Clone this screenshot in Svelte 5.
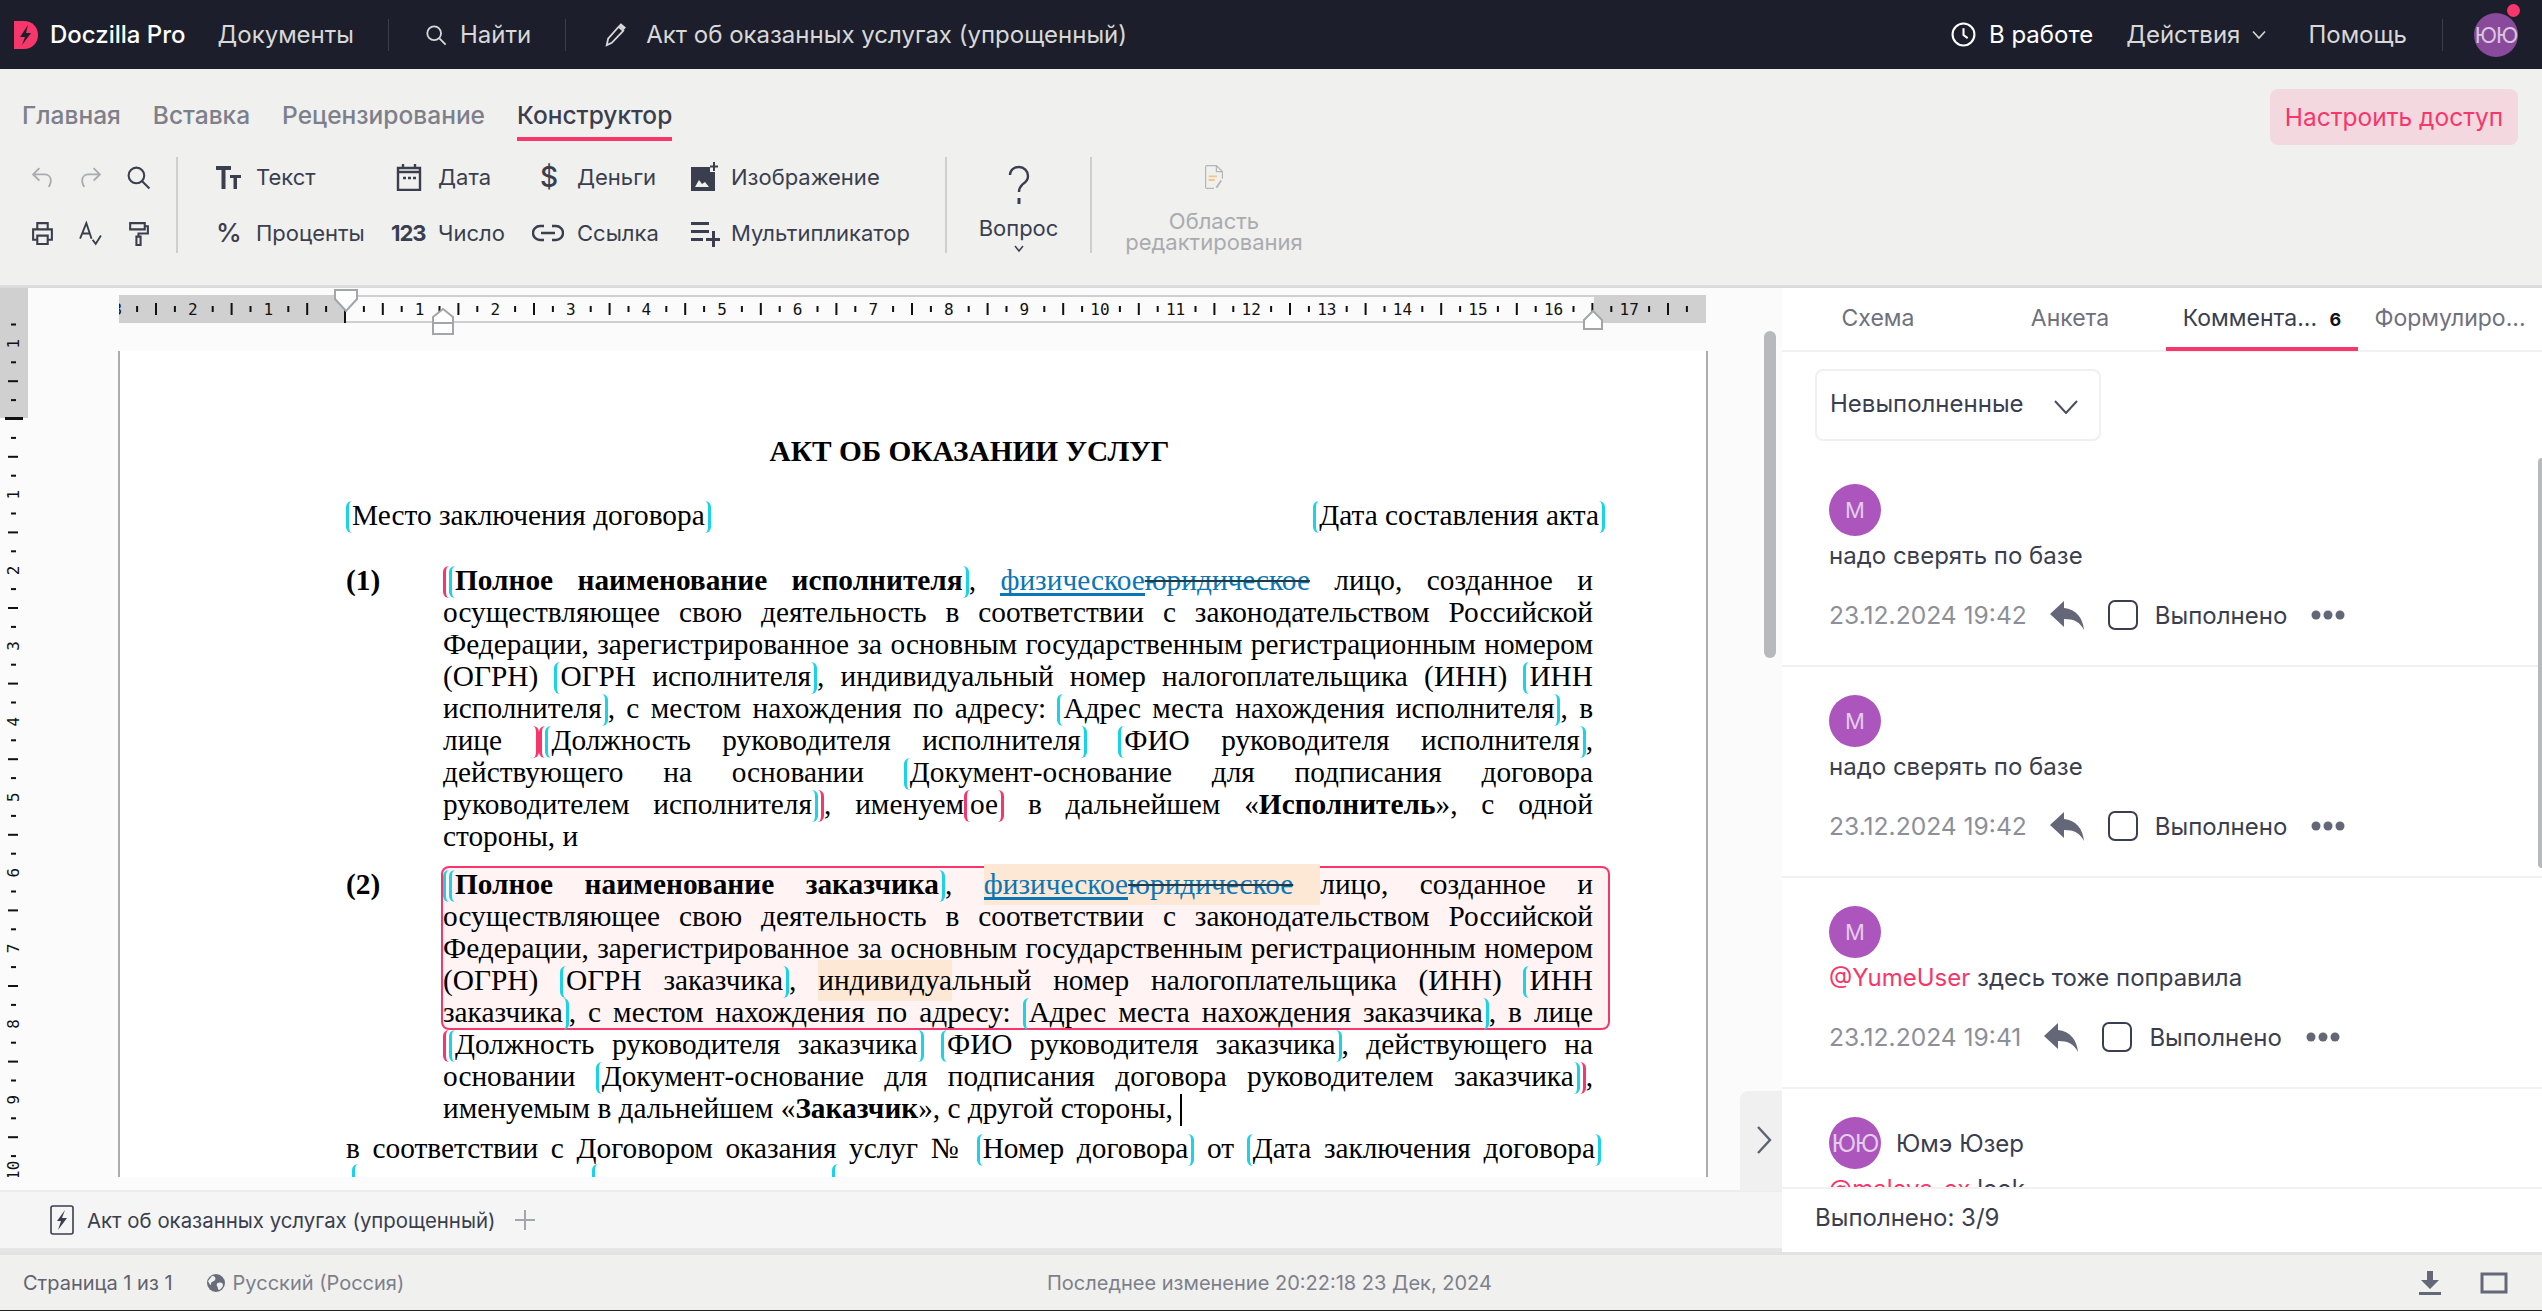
<script>
    // линейка: 75.6px на сантиметр, ноль на левом поле
    const CM = 75.6;
    const hNums = [-3, -2, -1, 1, 2, 3, 4, 5, 6, 7, 8, 9, 10, 11, 12, 13, 14, 15, 16, 17];
    const hTicks = [];
    for (let i = -12; i <= 71; i++) {
        if (i % 4 !== 0) hTicks.push({ x: i * CM / 4, long: i % 2 === 0 });
    }
    hTicks.push({ x: 0, long: true, zero: true });

    const vNums = [-1, 1, 2, 3, 4, 5, 6, 7, 8, 9, 10];
    const vTicks = [];
    for (let i = -5; i <= 41; i++) {
        if (i % 4 !== 0) vTicks.push({ y: i * CM / 4, long: i % 2 === 0 });
    }

    const comments = [
        { initials: "М", text: "надо сверять по базе", date: "23.12.2024 19:42" },
        { initials: "М", text: "надо сверять по базе", date: "23.12.2024 19:42" },
        { initials: "М", mention: "@YumeUser", text: " здесь тоже поправила", date: "23.12.2024 19:41" }
    ];
</script>

<div class="app">
    <header class="topbar">
        <svg class="logo" viewBox="0 0 24 28">
            <path d="M0 0h10c8 0 14 6 14 14s-6 14-14 14H0z" fill="#f7366b" />
            <path d="M14 4 6 16h5l-3 8 9-12h-5z" fill="#1c1f2b" />
        </svg>
        <span class="brand">Doczilla Pro</span>
        <span class="top-link docs">Документы</span>
        <span class="top-sep"></span>
        <svg class="ico-search" viewBox="0 0 24 24" fill="none" stroke="#d8d8d8" stroke-width="2">
            <circle cx="10" cy="10" r="7.5" /><path d="m15.5 15.5 7 7" />
        </svg>
        <span class="top-link find">Найти</span>
        <span class="top-sep"></span>
        <svg class="ico-pencil" viewBox="0 0 24 26" fill="none" stroke="#d8d8d8" stroke-width="2">
            <path d="M3 24l1.500-7L16 4l5 4.500L8.500 21.500zM17.500 2.500l1-1 4 3.500-1 1.200z" />
        </svg>
        <span class="doc-title">Акт об оказанных услугах (упрощенный)</span>
        <span class="spacer"></span>
        <svg class="ico-clock" viewBox="0 0 24 24" fill="none" stroke="#fff" stroke-width="2">
            <circle cx="12" cy="12" r="10.500" /><path d="M12 6v6.500l4 3" />
        </svg>
        <span class="status">В работе</span>
        <span class="top-link actions">Действия</span>
        <svg class="ico-chev" viewBox="0 0 16 10" fill="none" stroke="#d8d8d8" stroke-width="1.600">
            <path d="m2 1.500 6 6.500 6-6.500" />
        </svg>
        <span class="top-link help">Помощь</span>
        <span class="top-sep last"></span>
        <span class="user">ЮЮ<i class="dot"></i></span>
    </header>

    <section class="ribbon">
        <div class="ribbon-tabs">
            <span class="rtab">Главная</span>
            <span class="rtab">Вставка</span>
            <span class="rtab">Рецензирование</span>
            <span class="rtab active">Конструктор</span>
            <span class="spacer"></span>
            <button class="access">Настроить доступ</button>
        </div>
        <div class="ribbon-body">
            <div class="tools">
                <svg viewBox="0 0 24 24" fill="none" stroke="#a9abb2" stroke-width="1.800"><path d="M9 3 3 9l6 6M3 9h11c4 0 6 3 6 6s-1 4-2 6" /></svg>
                <svg viewBox="0 0 24 24" fill="none" stroke="#a9abb2" stroke-width="1.800"><path d="m15 3 6 6-6 6M21 9H10c-4 0-6 3-6 6s1 4 2 6" /></svg>
                <svg viewBox="0 0 24 24" fill="none" stroke="#3a3e4e" stroke-width="2"><circle cx="10" cy="10" r="7.500" /><path d="m15.500 15.500 7 7" /></svg>
                <svg viewBox="0 0 24 24" fill="none" stroke="#3a3e4e" stroke-width="2"><path d="M7 8V2h10v6M7 18H3V8h18v10h-4M7 14h10v8H7z" /></svg>
                <svg viewBox="0 0 24 24" fill="none" stroke="#3a3e4e" stroke-width="1.800"><path d="m2 17 6-15 5 15M4 12h7M14 18l3 4 5-8" /></svg>
                <svg viewBox="0 0 24 24" fill="none" stroke="#3a3e4e" stroke-width="2"><path d="M4 2h14v6H4zM18 5h3v7h-9v3M10 15h4v8h-4z" /></svg>
            </div>
            <div class="inserts">
                <svg class="i" width="26" height="24" viewBox="0 0 26 24" fill="#3a3e4e"><path d="M0 1h15v4H9.500v19h-4V5H0zM14 10h11v3h-4v11h-3.500V13H14z" /></svg>
                <span>Текст</span>
                <svg class="i cal" width="26" height="28" viewBox="0 0 26 28" fill="none" stroke="#3a3e4e" stroke-width="2.400"><path d="M2 5h22v22H2zM7 1v5M19 1v5M2 9h22" /><path d="M7 15h3M12 15h3M17 15h3" /></svg>
                <span>Дата</span>
                <span class="i dollar">$</span>
                <span>Деньги</span>
                <svg class="i" width="30" height="30" viewBox="0 0 30 30"><path d="M1 5h19v5h5v19H1z" fill="#3a3e4e" /><path d="m5 25 4-7 3 4 3-2 4 5z" fill="#f0f0ee" /><path d="M24 0v9M20 4.500h8" stroke="#3a3e4e" stroke-width="2" /></svg>
                <span>Изображение</span>
                <span class="i percent">%</span>
                <span>Проценты</span>
                <span class="i num">123</span>
                <span>Число</span>
                <svg class="i" width="32" height="18" viewBox="0 0 32 18" fill="none" stroke="#3a3e4e" stroke-width="2.400"><path d="M12 2H8a7 7 0 0 0 0 14h4M20 2h4a7 7 0 0 1 0 14h-4M9 9h14" /></svg>
                <span>Ссылка</span>
                <svg class="i" width="30" height="28" viewBox="0 0 30 28" fill="#3a3e4e"><path d="M1 3h18v3H1zM1 11h18v3H1zM1 19h12v3H1zM22 12h3v7h5v3h-5v6h-3v-6h-6v-3h6z" /></svg>
                <span>Мультипликатор</span>
            </div>
            <div class="question">
                <svg width="24" height="40" viewBox="0 0 24 40" fill="none" stroke="#3a3e4e" stroke-width="2.400"><path d="M3 10c0-5 4-8 9-8s9 4 9 9c0 4-2 6-5 8-2 2-4 3-4 8" /><path d="M12 33v6" stroke-width="3" /></svg>
                <span>Вопрос</span>
                <svg class="q-chev" width="12" height="8" viewBox="0 0 12 8" fill="none" stroke="#3a3e4e" stroke-width="1.500"><path d="m2 1 4 5 4-5" /></svg>
            </div>
            <div class="area">
                <svg width="30" height="40" viewBox="0 0 30 40" fill="none" stroke="#b4b5b9" stroke-width="2"><path d="M15 39H3a2 2 0 0 1-2-2V3a2 2 0 0 1 2-2h16l10 10v12M19 1v10h10" /><path d="M6 19h14M6 25h10" stroke="#f4c48c" stroke-width="3" /><path d="m19 38 8-12" stroke-width="3" /></svg>
                <span>Область<br />редактирования</span>
            </div>
        </div>
    </section>

    <div class="work">
        <div class="left">
            <div class="doc-area">
                <svg class="vruler" width="28" height="889">
                    <rect width="28" height="130" fill="#d0d0d0" />
                    <rect y="129" x="5" width="18" height="3" fill="#111" />
                    {#each vTicks as t}
                        <rect x={t.long ? 8 : 11} y={130 + t.y} width={t.long ? 10 : 5} height="2" fill="#111" />
                    {/each}
                    {#each vNums as n}
                        <text class="tick-num" transform="translate(19 {130 + n * CM + 6}) rotate(-90)">{Math.abs(n)}</text>
                    {/each}
                </svg>
                <div class="canvas">
                    <div class="hruler-wrap">
                        <svg class="hruler" width="1590" height="52">
                            <rect y="7" width="225" height="28" fill="#d0d0d0" />
                            <rect x="1475" y="7" width="112" height="28" fill="#d0d0d0" />
                            <path d="M0 8h1587M0 34h1587" stroke="#cfcfcf" stroke-width="2" />
                            {#each hTicks as t}
                                <rect x={225 + t.x} y={t.long ? 15 : 18} width="2" height={t.long ? (t.zero ? 20 : 12) : 6} fill="#111" />
                            {/each}
                            {#each hNums as n}
                                <text class="tick-num" text-anchor="middle" x={225 + n * CM} y="27">{Math.abs(n)}</text>
                            {/each}
                            <path d="M216 2h22v9l-11 12-11-12z" fill="#fff" stroke="#a4a5a9" stroke-width="2" />
                            <path d="M314 35v-6l10-8 10 8v6z" fill="#fff" stroke="#a4a5a9" stroke-width="2" />
                            <path d="M314 35h20v11h-20z" fill="#fff" stroke="#a4a5a9" stroke-width="2" />
                            <path d="M1465 41v-9l9-9 9 9v9z" fill="#fff" stroke="#a4a5a9" stroke-width="2" />
                        </svg>
                    </div>
                    <div class="page">
                        <div class="title">АКТ ОБ ОКАЗАНИИ УСЛУГ</div>
                        <div class="places">
                            <span class="f">Место заключения договора</span>
                            <span class="f">Дата составления акта</span>
                        </div>

                        <div class="clause">
                            <b class="no">(1)</b>
                            <div class="body">
                                <div class="l"><span class="lb-p"></span><span class="f"><b>Полное наименование исполнителя</b></span>, <span class="lnk">физическое</span><span class="del">юридическое</span> лицо, созданное и</div>
                                <div class="l">осуществляющее свою деятельность в соответствии с законодательством Российской</div>
                                <div class="l">Федерации, зарегистрированное за основным государственным регистрационным номером</div>
                                <div class="l">(ОГРН) <span class="f">ОГРН исполнителя</span>, индивидуальный номер налогоплательщика (ИНН) <span class="f no-close">ИНН</span></div>
                                <div class="l"><span class="f no-open">исполнителя</span>, с местом нахождения по адресу: <span class="f">Адрес места нахождения исполнителя</span>, в</div>
                                <div class="l">лице <span class="rb-p"></span><span class="lb-p"></span><span class="f">Должность руководителя исполнителя</span> <span class="f">ФИО руководителя исполнителя</span>,</div>
                                <div class="l">действующего на основании <span class="f no-close">Документ-основание для подписания договора</span></div>
                                <div class="l">руководителем исполнителя<span class="rb"></span><span class="rb-p"></span>, именуем<span class="lb-p"></span>ое<span class="rb-p"></span> в дальнейшем «<b>Исполнитель</b>», с одной</div>
                                <div class="l last">стороны, и</div>
                            </div>
                        </div>

                        <div class="clause second">
                            <b class="no">(2)</b>
                            <div class="body">
                                <div class="selected">
                                    <div class="l"><span class="lb"></span><span class="f"><b>Полное наименование заказчика</b></span>, <span class="hl trail"><span class="lnk">физическое</span><span class="del">юридическое</span></span>лицо, созданное и</div>
                                    <div class="l">осуществляющее свою деятельность в соответствии с законодательством Российской</div>
                                    <div class="l">Федерации, зарегистрированное за основным государственным регистрационным номером</div>
                                    <div class="l">(ОГРН) <span class="f">ОГРН заказчика</span>, <span class="hl">индивидуа</span>льный номер налогоплательщика (ИНН) <span class="f no-close">ИНН</span></div>
                                    <div class="l"><span class="f no-open">заказчика</span>, с местом нахождения по адресу: <span class="f">Адрес места нахождения заказчика</span>, в лице</div>
                                </div>
                                <div class="l"><span class="lb-p"></span><span class="f">Должность руководителя заказчика</span> <span class="f">ФИО руководителя заказчика</span>, действующего на</div>
                                <div class="l">основании <span class="f">Документ-основание для подписания договора руководителем заказчика</span><span class="rb-p"></span>,</div>
                                <div class="l last">именуемым в дальнейшем «<b>Заказчик</b>», с другой стороны, <span class="caret"></span></div>
                            </div>
                        </div>

                        <div class="l full">в соответствии с Договором оказания услуг № <span class="f">Номер договора</span> от <span class="f hang">Дата заключения договора</span></div>
                        <div class="next"><span class="lb"></span><span class="lb"></span><span class="lb"></span></div>
                    </div>
                </div>
                <div class="scroll"><i></i></div>
            </div>
            <div class="doc-foot"></div>
            <div class="doc-tabs">
                <svg width="24" height="30" viewBox="0 0 24 30" fill="none"><rect x="1" y="1" width="22" height="28" rx="2" stroke="#3a3e4e" stroke-width="1.600" /><path d="M15 5 7 16h4l-3 9 9-12h-5z" fill="#3a3e4e" /></svg>
                <span class="tab-name">Акт об оказанных услугах (упрощенный)</span>
                <svg class="plus" width="20" height="20" viewBox="0 0 20 20" stroke="#a4a6ad" stroke-width="2"><path d="M10 0v20M0 10h20" /></svg>
            </div>
            <button class="collapse" aria-label="Свернуть">
                <svg width="18" height="30" viewBox="0 0 18 30" fill="none" stroke="#5f6270" stroke-width="2.400"><path d="m3 2 12 13L3 28" /></svg>
            </button>
        </div>

        <aside class="panel">
            <div class="panel-tabs">
                <span>Схема</span>
                <span>Анкета</span>
                <span class="on">Коммента... <b>6</b></span>
                <span class="tail">Формулиро...</span>
            </div>
            <div class="filter">
                <div class="select">
                    Невыполненные
                    <svg width="24" height="14" viewBox="0 0 24 14" fill="none" stroke="#4a4d5c" stroke-width="2"><path d="m1 1 11 12L23 1" /></svg>
                </div>
            </div>
            <div class="list">
                {#each comments as c}
                    <div class="comment">
                        <div class="who"><span class="ava">{c.initials}</span></div>
                        <p>{#if c.mention}<span class="mention">{c.mention}</span>{/if}{c.text}</p>
                        <div class="meta">
                            <span class="date">{c.date}</span>
                            <svg class="reply" width="36" height="30" viewBox="0 0 36 30" fill="#646778"><path d="M15 1 1 14l14 13v-8c10 0 16 3 20 11-1-12-8-21-20-22z" /></svg>
                            <span class="check"></span>
                            <span class="done">Выполнено</span>
                            <svg class="more" width="34" height="10" viewBox="0 0 34 10" fill="#646778"><circle cx="5" cy="5" r="4.500" /><circle cx="17" cy="5" r="4.500" /><circle cx="29" cy="5" r="4.500" /></svg>
                        </div>
                    </div>
                {/each}
                <div class="comment cut">
                    <div class="who"><span class="ava">ЮЮ</span><span class="name">Юмэ Юзер</span></div>
                    <p><span class="mention">@maleva_ex</span> look</p>
                </div>
                <i class="list-bar"></i>
            </div>
            <div class="panel-foot">Выполнено: 3/9</div>
        </aside>
    </div>

    <footer class="statusbar">
        <span>Страница 1 из 1</span>
        <svg class="globe" width="18" height="18" viewBox="0 0 18 18"><circle cx="9" cy="9" r="9" fill="#696c7a" /><path d="M5 2c3 0 4 2 3 4S4 7 4 10 2 9 1 7zM11 9c3-1 5 0 5 2s-3 5-4 5-1-3-2-4 0-3 1-3z" fill="#f0f0ee" /></svg>
        <span class="lang">Русский (Россия)</span>
        <span class="changed">Последнее изменение 20:22:18 23 Дек, 2024</span>
        <svg class="dl" width="22" height="24" viewBox="0 0 22 24" fill="#646778"><path d="M8 0h6v9h6l-9 9-9-9h6zM0 21h22v3H0z" /></svg>
        <svg class="square" width="28" height="22" viewBox="0 0 28 22" fill="none" stroke="#646778" stroke-width="3"><path d="M2 2h24v18H2z" /></svg>
    </footer>
</div>

<style>
    :global(body) {
        margin: 0;
        background: #fff;
    }

    .app {
        width: 2542px;
        height: 1311px;
        overflow: hidden;
        display: flex;
        flex-direction: column;
        font-family: Inter, "Noto Sans", sans-serif;
        font-size: 24px;
        color: #3a3e4e;
    }

    .spacer {
        flex: 1;
    }

    /* верхняя панель */
    .topbar {
        height: 69px;
        flex: none;
        display: flex;
        align-items: center;
        background: #1c1f2b;
        color: #d8d8d8;
        padding-left: 14px;
    }

    .logo {
        width: 24px;
        height: 28px;
    }

    .brand {
        margin-left: 12px;
        color: #fff;
        font-weight: 500;
    }

    .docs {
        margin-left: 32px;
    }

    .top-sep {
        width: 1px;
        height: 32px;
        background: #3b3e4a;
        margin-left: 34px;
    }

    .ico-search {
        width: 22px;
        height: 22px;
        margin-left: 36px;
    }

    .find {
        margin-left: 13px;
    }

    .ico-pencil {
        width: 22px;
        height: 24px;
        margin-left: 38px;
    }

    .doc-title {
        margin-left: 20px;
    }

    .ico-clock {
        width: 25px;
        height: 25px;
    }

    .status {
        margin-left: 13px;
        color: #fff;
    }

    .actions {
        margin-left: 33px;
    }

    .ico-chev {
        width: 16px;
        height: 10px;
        margin-left: 11px;
    }

    .help {
        margin-left: 41px;
    }

    .top-sep.last {
        margin-left: 35px;
    }

    .user {
        position: relative;
        width: 44px;
        height: 44px;
        margin: 0 24px 0 31px;
        border-radius: 50%;
        background: #8a4a9c;
        color: #d9c6de;
        display: flex;
        align-items: center;
        justify-content: center;
        font-size: 22px;
        letter-spacing: -1px;
    }

    .dot {
        position: absolute;
        top: -9px;
        right: -2px;
        width: 13px;
        height: 13px;
        border-radius: 50%;
        background: #f7366b;
    }

    /* лента */
    .ribbon {
        height: 219px;
        box-sizing: border-box;
        flex: none;
        background: #f0f0ee;
        border-bottom: 3px solid #dcdcde;
    }

    .ribbon-tabs {
        height: 88px;
        display: flex;
        align-items: flex-start;
        padding: 20px 24px 0 22px;
        box-sizing: border-box;
        font-size: 24.500px;
    }

    .rtab {
        margin: 11px 32px 0 0;
        height: 37px;
        color: #7d7f8b;
        font-weight: 500;
    }

    .rtab.active {
        color: #3a3e4e;
        border-bottom: 4px solid #f7366b;
    }

    .access {
        width: 248px;
        height: 56px;
        border: none;
        border-radius: 8px;
        background: #f3d9df;
        color: #f7366b;
        font: inherit;
    }

    .ribbon-body {
        display: flex;
        height: 96px;
        font-size: 22px;
    }

    .tools {
        width: 160px;
        margin-left: 18px;
        box-sizing: border-box;
        border-right: 2px solid #cfcfcf;
        display: grid;
        grid-template-columns: 48px 48px 48px;
        grid-template-rows: 56px 56px;
        align-content: center;
        align-items: center;
        padding-left: 12px;
    }

    .tools svg {
        width: 25px;
        height: 25px;
    }

    .inserts {
        width: 769px;
        box-sizing: border-box;
        border-right: 2px solid #cfcfcf;
        padding-left: 38px;
        display: grid;
        grid-template-columns: 40px 135px 47px 94px 45px 113px 41px auto;
        grid-template-rows: 56px 56px;
        align-content: center;
        align-items: center;
    }

    .cal {
        margin-left: 5px;
    }

    .dollar {
        font-size: 28px;
        font-weight: 500;
        line-height: 1;
        padding-left: 8px;
    }

    .percent {
        font-size: 26px;
        font-weight: 500;
        line-height: 1;
    }

    .num {
        font-size: 22px;
        font-weight: 700;
        letter-spacing: -1px;
    }

    .question {
        width: 145px;
        box-sizing: border-box;
        border-right: 2px solid #cfcfcf;
        display: flex;
        flex-direction: column;
        align-items: center;
        padding-top: 8px;
        line-height: 26px;
    }

    .question span {
        margin-top: 10px;
    }

    .q-chev {
        margin-top: 4px;
    }

    .area {
        width: 244px;
        display: flex;
        flex-direction: column;
        align-items: center;
        padding-top: 8px;
        color: #aaabaf;
        text-align: center;
        line-height: 21px;
    }

    .area span {
        margin-top: 22px;
    }

    /* рабочая область */
    .work {
        height: 964px;
        flex: none;
        display: flex;
    }

    .left {
        width: 1782px;
        flex: none;
        display: flex;
        flex-direction: column;
        position: relative;
    }

    .doc-area {
        height: 889px;
        flex: none;
        display: flex;
        overflow: hidden;
        background: #fbfbfb;
    }

    .vruler {
        flex: none;
        background: #fbfbfb;
    }

    .tick-num {
        font-family: "DejaVu Sans Mono", monospace;
        font-size: 16px;
        fill: #111;
    }

    .canvas {
        width: 1736px;
        flex: none;
        padding-left: 90px;
        box-sizing: border-box;
    }

    .hruler-wrap {
        height: 63px;
    }

    .hruler {
        display: block;
        margin-left: 1px;
    }

    .page {
        width: 1590px;
        height: 900px;
        box-sizing: border-box;
        background: #fff;
        border-left: 2px solid #acacac;
        border-right: 2px solid #acacac;
        padding: 0 113px 0 226px;
        font-family: "Liberation Serif", serif;
        font-size: 29.33px;
        line-height: 32px;
        color: #000;
    }

    .title {
        font-weight: 700;
        text-align: center;
        padding-top: 84px;
    }

    .places {
        display: flex;
        justify-content: space-between;
        height: 32px;
        margin-top: 32px;
        margin-right: -12px;
    }

    .clause {
        display: flex;
        margin-top: 33px;
    }

    .clause.second {
        margin-top: 16px;
    }

    .no {
        width: 97px;
        flex: none;
    }

    .body {
        flex: 1;
        min-width: 0;
    }

    .l {
        height: 32px;
        text-align: justify;
        text-align-last: justify;
        white-space: nowrap;
    }

    .l.last {
        text-align-last: left;
    }

    .l.full {
        margin-top: 8px;
    }

    .next {
        display: flex;
        gap: 234px;
        padding-left: 6px;
        height: 32px;
    }

    .selected {
        background: #fff3f3;
        box-shadow: 0 0 0 2px #f7366b;
        border-radius: 6px;
        margin-right: -15px;
        padding-right: 15px;
    }

    /* скобки полей */
    .f::before,
    .lb,
    .lb-p {
        content: "";
        display: inline-block;
        width: 6px;
        height: 32px;
        box-sizing: border-box;
        border-left: 3px solid #19d3e6;
        border-radius: 7px 0 0 7px;
        vertical-align: -8px;
    }

    .f::after,
    .rb,
    .rb-p {
        content: "";
        display: inline-block;
        width: 6px;
        height: 32px;
        box-sizing: border-box;
        border-right: 3px solid #19d3e6;
        border-radius: 0 7px 7px 0;
        vertical-align: -8px;
    }

    .lb-p,
    .rb-p {
        border-color: #f7366b;
    }

    .f.no-open::before,
    .f.no-close::after {
        display: none;
    }

    .f.hang::after {
        margin-right: -8px;
    }

    .lnk {
        color: #0b76b5;
        border-bottom: 3px solid #0b76b5;
        line-height: 26px;
        display: inline-block;
    }

    .del {
        color: #0b76b5;
        text-decoration: line-through;
        text-decoration-color: #1c3a4a;
    }

    .hl {
        background: #fde8d6;
        padding: 4px 0 5px;
    }

    .hl.trail {
        padding-right: 27px;
    }

    .caret {
        display: inline-block;
        width: 2px;
        height: 32px;
        background: #000;
        vertical-align: -8px;
    }

    .collapse {
        position: absolute;
        right: 0;
        top: 803px;
        width: 42px;
        height: 100px;
        border: none;
        border-radius: 8px 0 0 0;
        background: #f0f0f0;
        padding: 0 0 0 6px;
    }

    .scroll {
        width: 18px;
        flex: none;
        padding: 43px 4px 0 0;
        box-sizing: border-box;
    }

    .scroll i {
        display: block;
        width: 12px;
        height: 327px;
        border-radius: 6px;
        background: #b8b9bd;
    }

    .doc-foot {
        height: 15px;
        box-sizing: border-box;
        flex: none;
        background: #fbfbfb;
        border-bottom: 2px solid #ececec;
    }

    .doc-tabs {
        flex: 1;
        display: flex;
        align-items: center;
        background: #f5f5f5;
        border-bottom: 4px solid #e6e6e6;
        padding-left: 50px;
    }

    .tab-name {
        margin-left: 13px;
        font-size: 20.400px;
    }

    .plus {
        margin-left: 20px;
    }

    /* правая панель */
    .panel {
        width: 760px;
        flex: none;
        display: flex;
        flex-direction: column;
        background: #fff;
        position: relative;
        z-index: 1;
    }

    .panel-tabs {
        height: 64px;
        flex: none;
        display: flex;
        border-bottom: 2px solid #f1f1f1;
        box-sizing: border-box;
        color: #6f717d;
        font-size: 23px;
    }

    .panel-tabs span {
        width: 192px;
        flex: none;
        height: 63px;
        box-sizing: border-box;
        text-align: center;
        line-height: 61px;
        white-space: nowrap;
    }

    .panel-tabs .tail {
        width: 184px;
    }

    .panel-tabs .on {
        color: #3a3e4e;
        border-bottom: 4px solid #f7366b;
    }

    .panel-tabs b {
        color: #111;
        font-size: 18px;
        margin-left: 6px;
    }

    .filter {
        height: 104px;
        flex: none;
        padding: 17px 0 0 33px;
        box-sizing: border-box;
    }

    .select {
        width: 286px;
        height: 72px;
        box-sizing: border-box;
        border: 2px solid #f0f0f0;
        border-radius: 8px;
        display: flex;
        align-items: center;
        justify-content: space-between;
        padding: 0 21px 4px 13px;
    }

    .select svg {
        margin-top: 8px;
    }

    .list {
        flex: 1;
        min-height: 0;
        overflow: hidden;
        position: relative;
    }

    .list-bar {
        position: absolute;
        right: 0;
        top: 2px;
        width: 4px;
        height: 410px;
        border-radius: 4px 0 0 4px;
        background: #b8b9bd;
    }

    .comment {
        height: 211px;
        box-sizing: border-box;
        padding: 28px 0 0 47px;
        border-bottom: 2px solid #f1f1f1;
    }

    .who {
        display: flex;
        align-items: center;
        height: 52px;
    }

    .ava {
        width: 52px;
        height: 52px;
        border-radius: 50%;
        background: #ab55bd;
        color: #e4cdea;
        display: flex;
        align-items: center;
        justify-content: center;
        font-size: 22px;
    }

    .cut .ava {
        font-size: 24px;
        letter-spacing: -1px;
    }

    .name {
        margin-left: 15px;
    }

    .comment p {
        margin: 4px 0 0;
        line-height: 32px;
    }

    .mention {
        color: #f7366b;
    }

    .meta {
        display: flex;
        align-items: center;
        height: 40px;
        margin-top: 23px;
    }

    .date {
        color: #8d8f99;
        font-size: 24.600px;
    }

    .reply {
        margin-left: 22px;
    }

    .check {
        width: 30px;
        height: 30px;
        box-sizing: border-box;
        border: 2px solid #3a3e4e;
        border-radius: 7px;
        margin-left: 23px;
    }

    .done {
        margin-left: 17px;
    }

    .more {
        margin-left: 24px;
    }

    .panel-foot {
        height: 65px;
        flex: none;
        box-sizing: border-box;
        border-top: 2px solid #f1f1f1;
        padding: 14px 0 0 33px;
    }

    /* строка состояния */
    .statusbar {
        height: 59px;
        flex: none;
        display: flex;
        align-items: center;
        position: relative;
        background: #f0f0ee;
        border-top: 3px solid #e2e2e2;
        border-bottom: 1px solid #222;
        box-sizing: border-box;
        padding-left: 23px;
        font-size: 20px;
        color: #5f6270;
    }

    .globe {
        margin-left: 34px;
    }

    .lang {
        margin-left: 8px;
        color: #7d7f8b;
    }

    .changed {
        position: absolute;
        left: 1047px;
        color: #7d7f8b;
    }

    .dl {
        margin-left: auto;
    }

    .square {
        margin: 0 34px 0 39px;
    }
</style>
